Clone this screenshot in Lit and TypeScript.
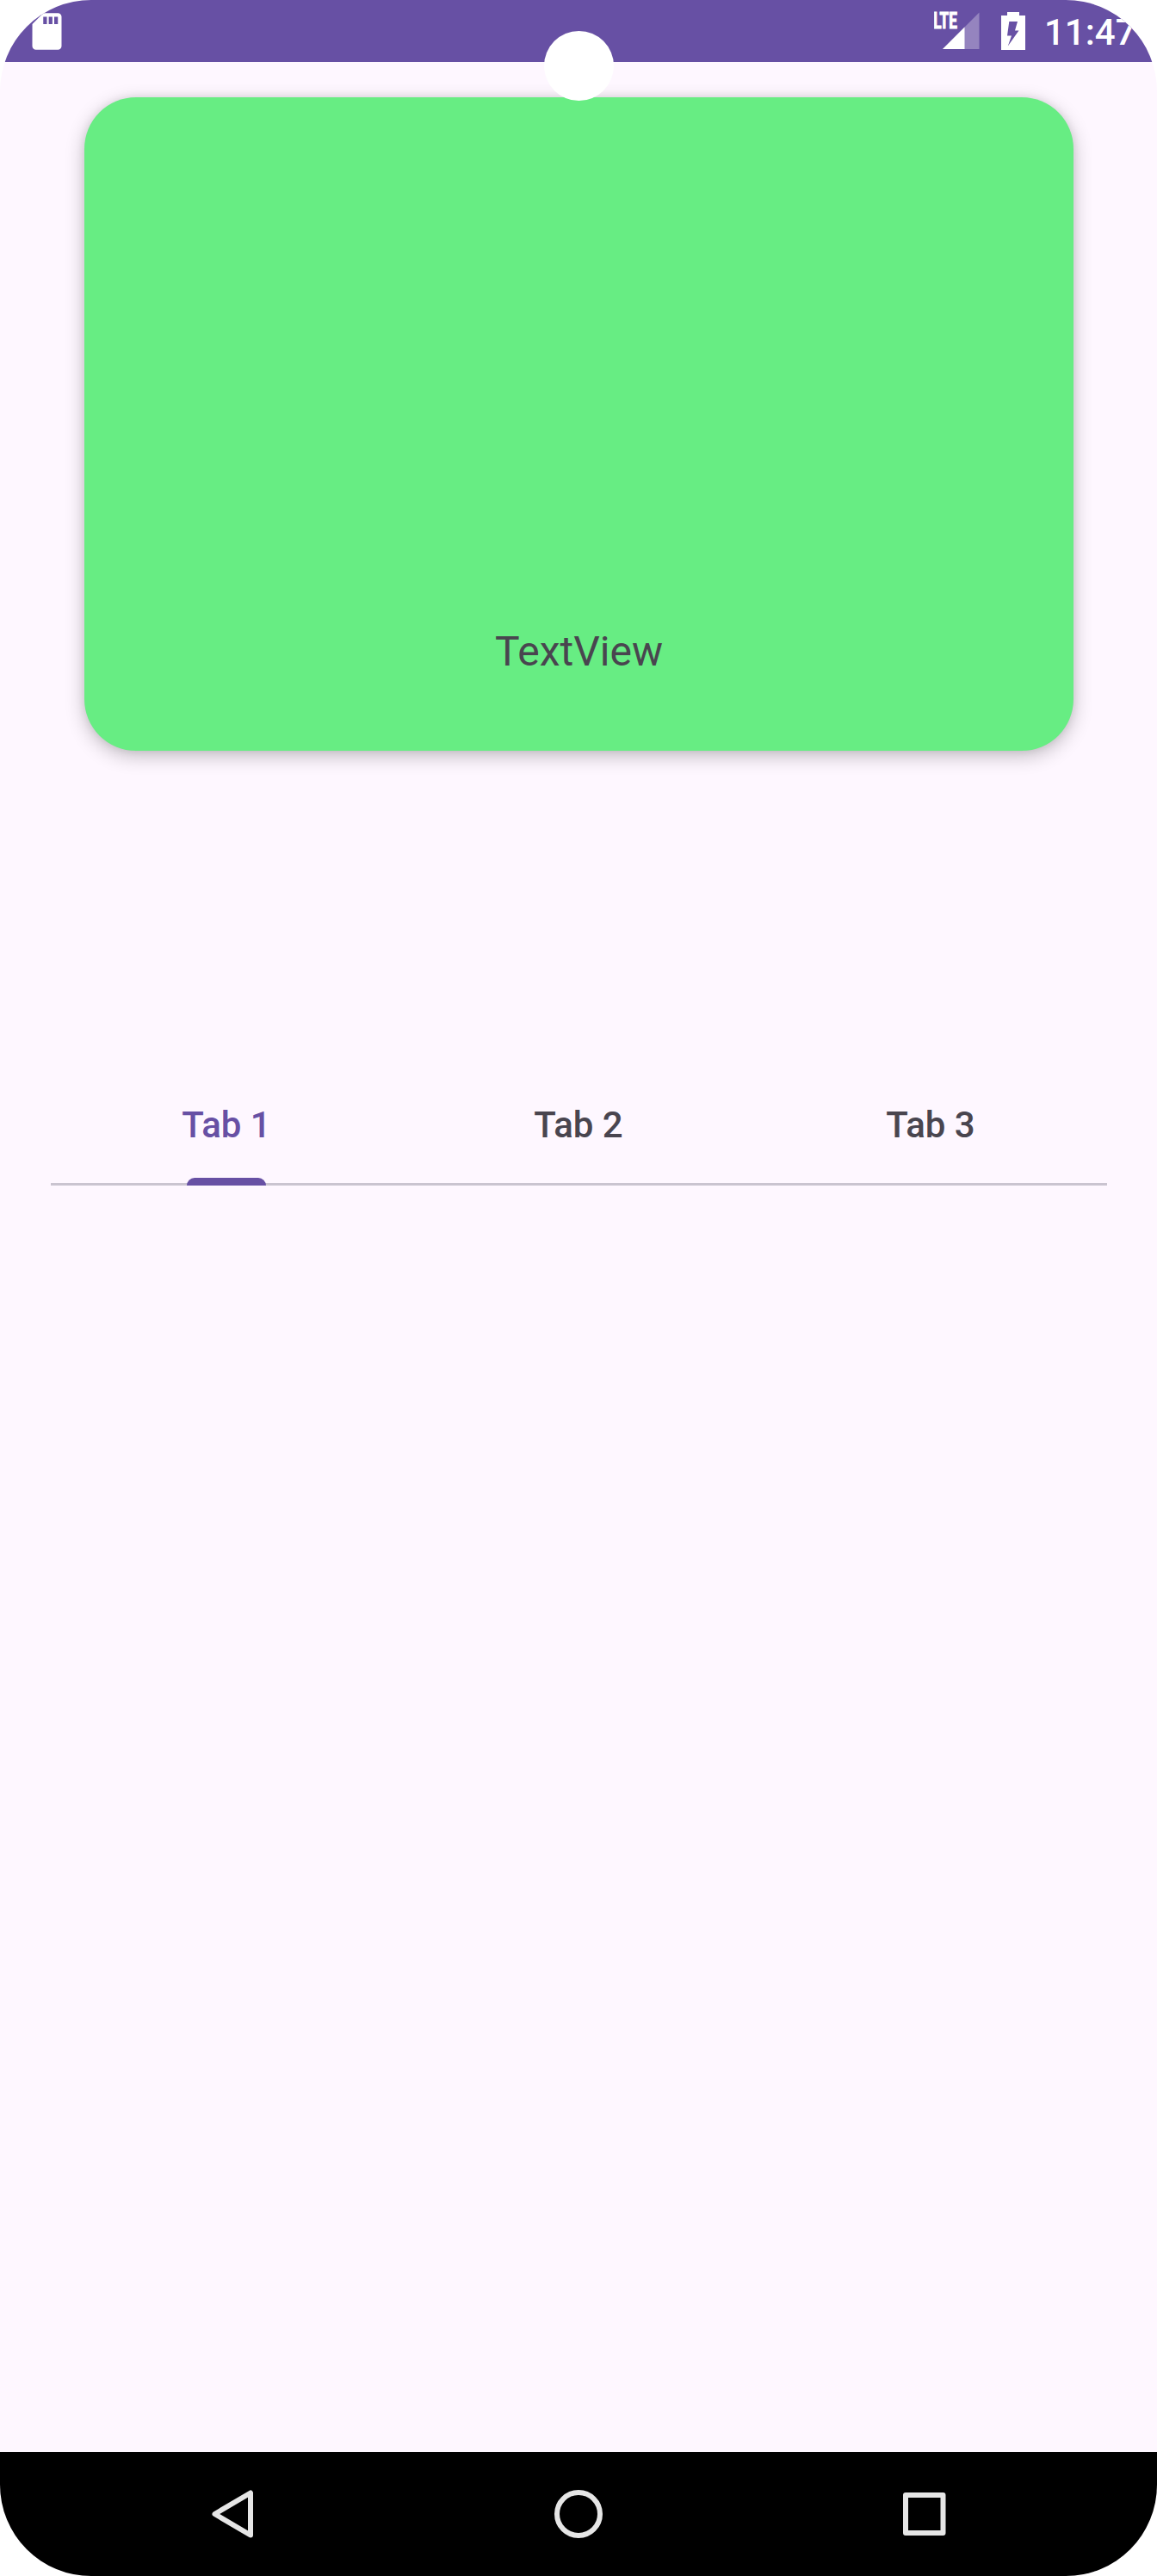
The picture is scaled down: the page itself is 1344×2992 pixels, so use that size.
import { LitElement, html, css } from "lit";
import { customElement, state } from "lit/decorators.js";

@customElement("status-bar")
class StatusBar extends LitElement {
  static styles = css`
    :host { display: flex; align-items: flex-start; justify-content: space-between; height: 72px; background: #6750a4; color: #fff; overflow: hidden; }
    svg { display: block; flex: none; }
    .left { padding: 10.75px 0 0 28.5px; }
    .right { display: flex; align-items: flex-start; }
    .signal { width: 60px; height: 72px; margin-right: 18px; }
    .battery { width: 28px; height: 72px; margin-right: 22px; }
    .clock { width: 131px; font: 500 42px/49px Roboto, sans-serif; padding-top: 13px; white-space: nowrap; }
    .lte { font: 700 25px Roboto, sans-serif; fill: #fff; stroke: #fff; stroke-width: 1.1px; }
  `;
  render() {
    return html`
      <div class="left">
        <svg width="51" height="51" viewBox="0 0 24 24" fill="#fff"><path d="M18 2h-8L4.02 8 4 20c0 1.1.9 2 2 2h12c1.1 0 2-.9 2-2V4c0-1.1-.9-2-2-2zm-6 6h-2V4h2v4zm3 0h-2V4h2v4zm3 0h-2V4h2v4z"/></svg>
      </div>
      <div class="right">
        <svg class="signal" viewBox="0 0 60 72">
          <path d="M52.500 14.5V57H10z" fill="#fff" fill-opacity=".3"/>
          <path d="M35.500 31.500V57H10z" fill="#fff"/>
          <text class="lte" x="-0.8" y="33.2" textLength="27.6" lengthAdjust="spacingAndGlyphs">LTE</text>
        </svg>
        <svg class="battery" viewBox="0 0 28 72">
          <path fill="#fff" fill-rule="evenodd" d="M7 14h14v4h7v40H0V18h7zM9.300 25L7 41.500h5L7.800 53.500L20.500 35.500H16L19 25z"/>
        </svg>
        <div class="clock">11:47</div>
      </div>`;
  }
}

@customElement("tab-strip")
class TabStrip extends LitElement {
  @state() selected = 0;
  tabs = ["Tab 1", "Tab 2", "Tab 3"];
  static styles = css`
    :host { display: grid; grid-template-columns: repeat(3, 1fr); height: 144px; box-sizing: border-box; background: linear-gradient(#cac4d0, #cac4d0) bottom / 100% 3px no-repeat; }
    .tab { display: flex; flex-direction: column; align-items: center; justify-content: space-between; padding-top: 49px; padding-right: 1px; font: 500 42px/50px Roboto, sans-serif; color: #49454f; cursor: pointer; }
    .tab.active { color: #6750a4; }
    .indicator { width: 92px; height: 9px; border-radius: 9px 9px 0 0; background: #6750a4; }
  `;
  render() {
    return this.tabs.map((t, i) => html`
      <div class="tab ${i === this.selected ? "active" : ""}" @click=${() => (this.selected = i)}>
        <span>${t}</span>
        ${i === this.selected ? html`<div class="indicator"></div>` : ""}
      </div>`);
  }
}

@customElement("nav-bar")
class NavBar extends LitElement {
  static styles = css`
    :host { display: flex; justify-content: center; align-items: center; height: 144px; background: #000; }
    .key { width: 402px; display: flex; justify-content: center; }
    svg { display: block; width: 72px; height: 72px; fill: none; stroke: #e6e6e6; stroke-width: 6; stroke-linejoin: round; }
  `;
  render() {
    return html`
      <div class="key"><svg viewBox="0 0 72 72"><path d="M57 11.500V60.500L15.500 36z"/></svg></div>
      <div class="key"><svg viewBox="0 0 72 72"><circle cx="36" cy="36" r="25"/></svg></div>
      <div class="key"><svg viewBox="0 0 72 72"><rect x="14" y="14" width="43.500" height="44"/></svg></div>`;
  }
}

@customElement("app-root")
class AppRoot extends LitElement {
  static styles = css`
    :host { display: block; background: #fff; }
    .screen { position: relative; display: flex; flex-direction: column; width: 1344px; height: 2992px; border-radius: 106px; overflow: hidden; background: #fef7ff; }
    .camera { position: absolute; left: 631.5px; top: 35.5px; width: 81px; height: 81px; border-radius: 50%; background: #fff; }
    .card { margin: 41px 97px 0 98px; height: 759px; box-sizing: border-box; border-radius: 60px; background: #67ed83; display: flex; align-items: flex-end; justify-content: center; padding-bottom: 87px;
      box-shadow: 0 6px 22px rgba(0,0,0,.24), 0 0 10px rgba(0,0,0,.08); font: 400 48px/56px Roboto, sans-serif; color: #49454f; }
    .tabs { margin: 361px 58px 0 59px; }
    .body { flex: 1; }
  `;
  render() {
    return html`
      <div class="screen">
        <status-bar></status-bar>
        <div class="card"><span>TextView</span></div>
        <tab-strip class="tabs"></tab-strip>
        <div class="body"></div>
        <nav-bar></nav-bar>
        <div class="camera"></div>
      </div>`;
  }
}
